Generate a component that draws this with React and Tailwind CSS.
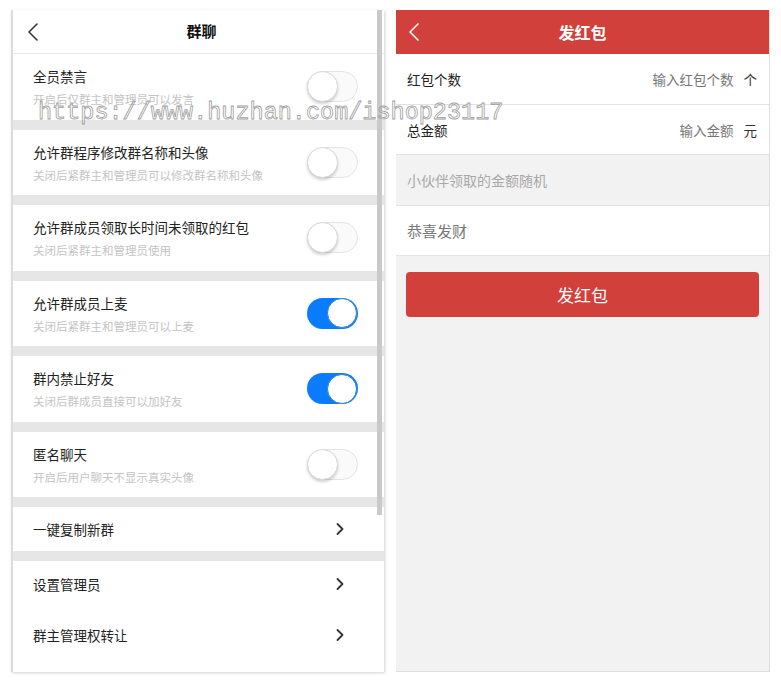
import React from "react";

const font = { fontFamily: '"Noto Sans CJK SC", "Noto Sans", sans-serif' };

const toggles = [
  { title: "全员禁言", sub: "开启后仅群主和管理员可以发言", on: false },
  { title: "允许群程序修改群名称和头像", sub: "关闭后紧群主和管理员可以修改群名称和头像", on: false },
  { title: "允许群成员领取长时间未领取的红包", sub: "关闭后紧群主和管理员使用", on: false },
  { title: "允许群成员上麦", sub: "关闭后紧群主和管理员可以上麦", on: true },
  { title: "群内禁止好友", sub: "关闭后群成员直接可以加好友", on: true },
  { title: "匿名聊天", sub: "开启后用户聊天不显示真实头像", on: false },
];

function Back({ color }) {
  return (
    <svg width="12" height="20" viewBox="0 0 12 20" fill="none">
      <path d="M10 2 L2 10 L10 18" stroke={color} strokeWidth="1.6" strokeLinecap="round" strokeLinejoin="round" />
    </svg>
  );
}

function Chevron() {
  return (
    <svg width="8" height="14" viewBox="0 0 8 14" fill="none">
      <path d="M1.5 2 L6.5 7 L1.5 12" stroke="#333" strokeWidth="1.8" strokeLinecap="round" strokeLinejoin="round" />
    </svg>
  );
}

function Switch({ on }) {
  if (on) {
    return (
      <div className="w-[51px] h-[31px] rounded-full bg-[#0a7cff] flex items-center justify-end pr-[1px]">
        <div className="w-[30px] h-[30px] rounded-full bg-white border border-[#2d7fd6]" />
      </div>
    );
  }
  return (
    <div className="w-[51px] h-[31px] rounded-full bg-[#fafafa] border border-[#e4e4e4] flex items-center">
      <div className="w-[31px] h-[31px] -ml-[1px] rounded-full bg-white border border-[#d8d8d8] shadow-[0_2px_3px_rgba(0,0,0,0.18)]" />
    </div>
  );
}

function ToggleRow({ item }) {
  return (
    <>
      <div className="h-[65.5px] flex items-center justify-between pl-[20px] pr-[26px] bg-white">
        <div className="flex flex-col pt-[1px]">
          <span className="text-[13.5px] text-[#222] leading-[20px]">{item.title}</span>
          <span className="text-[11.5px] text-[#c4c4c4] leading-[18px] mt-[4px]">{item.sub}</span>
        </div>
        <Switch on={item.on} />
      </div>
      <div className="h-[10px] bg-[#e6e6e6]" />
    </>
  );
}

function LinkRow({ title, h }) {
  return (
    <div className={`${h} flex items-center justify-between pl-[20px] pr-[40px] bg-white`}>
      <span className="text-[13.5px] text-[#222]">{title}</span>
      <Chevron />
    </div>
  );
}

function GroupPanel() {
  return (
    <div className="relative w-[373px] h-[662px] bg-white border-l-2 border-[#dcdcdc] shadow-[1px_1px_3px_rgba(0,0,0,0.18)] flex flex-col overflow-hidden">
      <div className="h-[44px] flex items-center justify-center relative border-b border-[#e8e8e8] shrink-0">
        <div className="absolute left-[14px] top-[12px]">
          <Back color="#333" />
        </div>
        <span className="text-[15px] font-bold text-[#111] ml-[6px]">群聊</span>
      </div>
      {toggles.map((t) => (
        <ToggleRow key={t.title} item={t} />
      ))}
      <LinkRow title="一键复制新群" h="h-[44px]" />
      <div className="h-[10px] bg-[#e6e6e6]" />
      <LinkRow title="设置管理员" h="h-[46px]" />
      <LinkRow title="群主管理权转让" h="h-[56px]" />
      <div className="absolute right-[2px] top-0 w-[5px] h-[505px] bg-[#c9c9c9]" />
    </div>
  );
}

function RedPacketPanel() {
  return (
    <div className="w-[374px] h-[662px] bg-[#f2f2f2] border-r border-b border-[#dedede] flex flex-col">
      <div className="h-[44px] bg-[#d1403a] flex items-center justify-center relative shrink-0">
        <div className="absolute left-[12px] top-[12px]">
          <Back color="#fff" />
        </div>
        <span className="text-[16px] font-bold text-white">发红包</span>
      </div>
      <div className="h-[51px] bg-white border-b border-[#e3e3e3] flex items-center justify-between pl-[11px] pr-[12px]">
        <span className="text-[13.5px] text-[#222]">红包个数</span>
        <span className="text-[13.5px] text-[#777]">
          输入红包个数<span className="text-[#333] ml-[10px]">个</span>
        </span>
      </div>
      <div className="h-[50px] bg-white border-b border-[#e3e3e3] flex items-center justify-between pl-[11px] pr-[12px] pt-[2px]">
        <span className="text-[13.5px] text-[#222]">总金额</span>
        <span className="text-[13.5px] text-[#777]">
          输入金额<span className="text-[#333] ml-[10px]">元</span>
        </span>
      </div>
      <div className="h-[51px] bg-[#f2f2f2] border-b border-[#e3e3e3] flex items-center pl-[11px]">
        <span className="text-[14px] text-[#a8a8a8]">小伙伴领取的金额随机</span>
      </div>
      <div className="h-[50px] bg-white border-b border-[#e3e3e3] flex items-center pl-[11px] pt-[2px]">
        <span className="text-[15px] text-[#777]">恭喜发财</span>
      </div>
      <div className="px-[10px] pt-[16px]">
        <div className="h-[45px] rounded-[4px] bg-[#d1403a] flex items-center justify-center">
          <span className="text-[17px] text-white">发红包</span>
        </div>
      </div>
    </div>
  );
}

export default function App() {
  return (
    <div className="relative w-[781px] h-[685px] bg-white" style={font}>
      <div className="flex gap-[12px] pl-[11px] pt-[10px]">
        <GroupPanel />
        <RedPacketPanel />
      </div>
      <div
        className="absolute left-[38px] top-[95px] text-[23.5px] text-transparent whitespace-nowrap pointer-events-none [-webkit-text-stroke:0.8px_#a0a0a0]"
        style={{ fontFamily: '"Liberation Mono", monospace' }}
      >
        https://www.huzhan.com/ishop23117
      </div>
    </div>
  );
}
